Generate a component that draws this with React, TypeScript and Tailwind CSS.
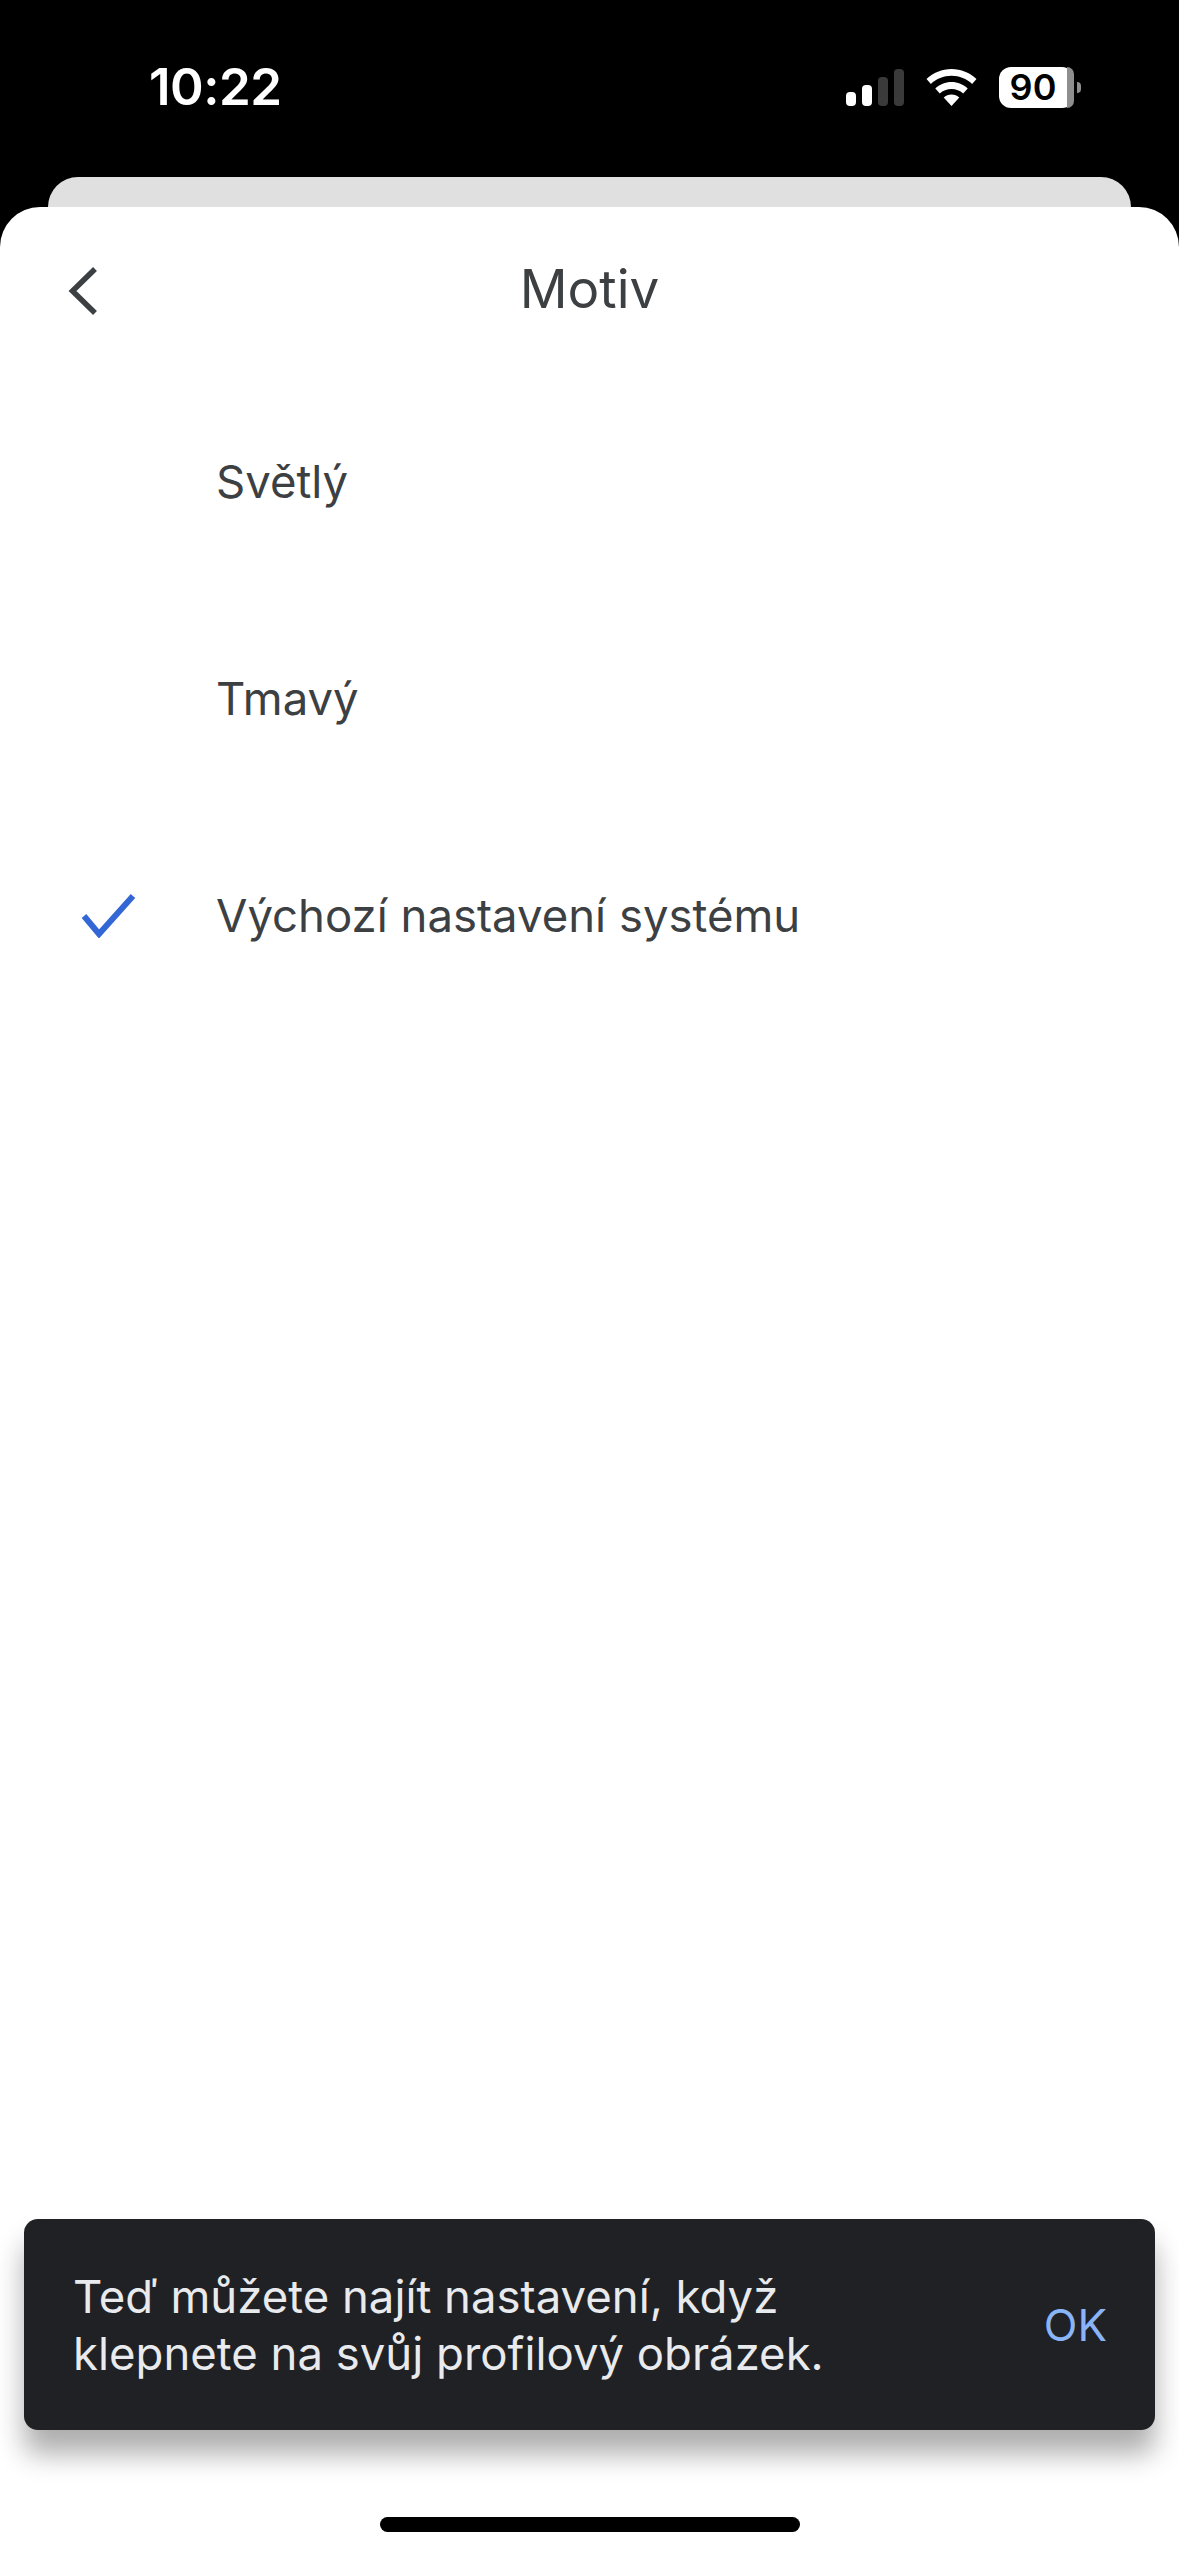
export default function App() {
  const items = ["Světlý", "Tmavý", "Výchozí nastavení systému"];
  return (
    <div className="flex h-[2556px] w-[1179px] flex-col overflow-hidden bg-black font-['Inter',sans-serif]">
      <div className="flex h-[177px] shrink-0 items-start">
        <div className="ml-[149px] mt-[57px] text-[51px] leading-[60px] font-semibold tracking-[-0.5px] text-white">
          10:22
        </div>
        <div className="ml-auto mr-[98px] mt-[67px] flex items-end">
          <svg width="58" height="37" viewBox="0 0 58 37" className="mb-[2px]">
            <rect x="0" y="23" width="10" height="14" rx="4" fill="#fff" />
            <rect x="16" y="16" width="10" height="21" rx="4" fill="#fff" />
            <rect x="32" y="8" width="10" height="29" rx="4" fill="#3a3a3a" />
            <rect x="48" y="0" width="10" height="37" rx="4" fill="#3a3a3a" />
          </svg>
          <svg width="51" height="37" viewBox="0 0 51 37" className="mb-[2px] ml-[22px]">
            <path d="M25.5 0C16 0 7.2 3.7 0.5 10l4.4 5C10.4 9.800 17.600 6.800 25.500 6.800S40.600 9.800 46.100 15l4.400-5C43.800 3.700 35 0 25.500 0Z" fill="#fff" />
            <path d="M25.500 13C19.300 13 13.600 15.400 9.300 19.500l4.500 5C16.900 21.700 21 20 25.500 20s8.600 1.700 11.700 4.500l4.500-5C37.400 15.400 31.700 13 25.500 13Z" fill="#fff" />
            <path d="M25.500 25.500c-3 0-5.700 1.100-7.800 3L25.500 37l7.800-8.500c-2.100-1.900-4.800-3-7.800-3Z" fill="#fff" />
          </svg>
          <div className="ml-[22px] flex items-center">
            <div className="flex h-[41px] w-[75px] items-center rounded-[12px] bg-white">
              <div className="flex-1 text-center text-[36px] leading-[41px] font-semibold text-black">90</div>
              <div className="h-full w-[7px] rounded-r-[12px] bg-[#8e8e8e]" />
            </div>
            <div className="ml-[3px] h-[11px] w-[4px] rounded-r-[4px] bg-[#8e8e8e]" />
          </div>
        </div>
      </div>
      <div className="mx-[48px] h-[30px] shrink-0 rounded-t-[30px] bg-[#e0e0e0]" />
      <div className="flex flex-1 flex-col rounded-t-[40px] bg-white">
        <div className="relative flex h-[104px] shrink-0 items-center justify-center">
          <svg width="34" height="50" viewBox="0 0 34 50" className="absolute left-[66px] top-[60px]" fill="none">
            <path d="M29 2 L6.500 24 L29 46" stroke="#3c4043" strokeWidth="5.500" />
          </svg>
          <div className="mt-[60px] text-[53px] leading-[64px] text-[#3c4043]">Motiv</div>
        </div>
        <div className="mt-[62px] flex flex-col">
          {items.map((t, i) => (
            <div key={t} className="flex h-[217px] items-center">
              <div className="flex w-[216px] shrink-0 justify-start pl-[81px]">
                {i === 2 && (
                  <svg width="56" height="44" viewBox="0 0 56 44" fill="none">
                    <path d="M3 22 L18 40 L52 2" stroke="#3367d6" strokeWidth="6" />
                  </svg>
                )}
              </div>
              <div className="text-[45.500px] leading-[56px] text-[#3c4043]">{t}</div>
            </div>
          ))}
        </div>
        <div className="mx-[24px] mt-auto flex h-[211px] items-center rounded-[14px] bg-[#202124] pl-[49px] pr-[48px] shadow-[0_24px_28px_rgba(0,0,0,0.32)]">
          <div className="flex-1 text-[45.500px] leading-[57px] text-[#e8eaed]">
            Teď můžete najít nastavení, když
            <br />
            klepnete na svůj profilový obrázek.
          </div>
          <div className="text-[44px] leading-[52px] text-[#8ab4f8]">OK</div>
        </div>
        <div className="mx-auto mb-[24px] mt-[87px] h-[15px] w-[420px] rounded-full bg-black" />
      </div>
    </div>
  );
}
